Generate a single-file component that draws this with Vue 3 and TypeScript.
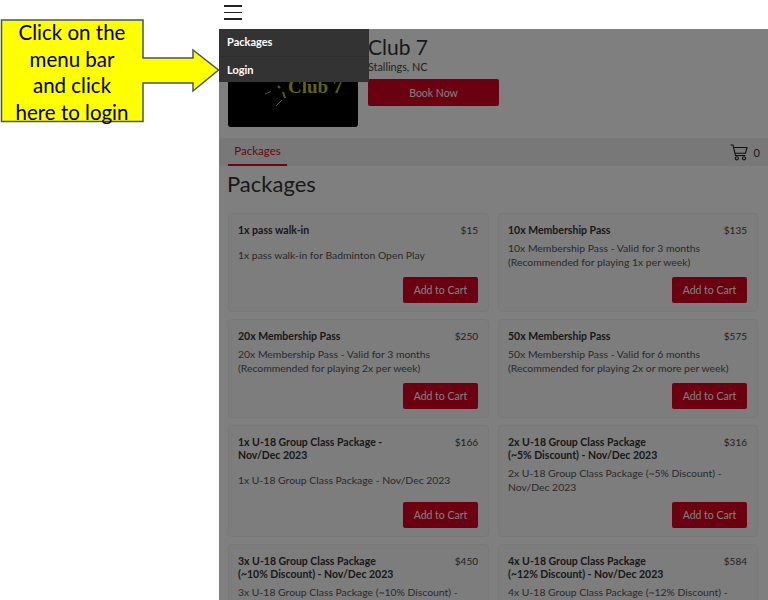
<script setup lang="ts">
interface Pack {
  name: string
  price: string
  desc: string
}

const packages: Pack[] = [
  { name: '1x pass walk-in', price: '$15', desc: '1x pass walk-in for Badminton Open Play' },
  { name: '10x Membership Pass', price: '$135', desc: '10x Membership Pass - Valid for 3 months (Recommended for playing 1x per week)' },
  { name: '20x Membership Pass', price: '$250', desc: '20x Membership Pass - Valid for 3 months (Recommended for playing 2x per week)' },
  { name: '50x Membership Pass', price: '$575', desc: '50x Membership Pass - Valid for 6 months (Recommended for playing 2x or more per week)' },
  { name: '1x U-18 Group Class Package - Nov/Dec 2023', price: '$166', desc: '1x U-18 Group Class Package - Nov/Dec 2023' },
  { name: '2x U-18 Group Class Package (~5% Discount) - Nov/Dec 2023', price: '$316', desc: '2x U-18 Group Class Package (~5% Discount) - Nov/Dec 2023' },
  { name: '3x U-18 Group Class Package (~10% Discount) - Nov/Dec 2023', price: '$450', desc: '3x U-18 Group Class Package (~10% Discount) - Nov/Dec 2023' },
  { name: '4x U-18 Group Class Package (~12% Discount) - Nov/Dec 2023', price: '$584', desc: '4x U-18 Group Class Package (~12% Discount) - Nov/Dec 2023' },
]
</script>

<template>
  <div class="page">
    <!-- left side is empty, the callout sits on top of it -->
    <div class="side"></div>

    <div class="main">
      <header class="topbar">
        <button class="burger" aria-label="Menu">
          <span></span><span></span><span></span>
        </button>
      </header>

      <div class="content">
        <section class="hero">
          <div class="logo">
            <svg class="logo-ticks" width="30" height="32" viewBox="0 0 30 32">
              <path d="M0 17 L6 14.5 M11 29 L17 23" stroke="#b4b41e" stroke-width="1" fill="none" />
              <path d="M13 9 L15 11 M18 15 L20 21" stroke="#b4b41e" stroke-width="2" fill="none" />
            </svg>
            <span class="logo-text">Club 7</span>
          </div>
          <div class="hero-info">
            <h2 class="club">Club 7</h2>
            <p class="place">Stallings, NC</p>
            <button class="btn book">Book Now</button>
          </div>
        </section>

        <nav class="tabs">
          <span class="tab">Packages</span>
          <span class="cart">
            <svg width="18" height="17" viewBox="0 0 18 17" fill="none" stroke="#222" stroke-width="1.1">
              <path d="M0.5 1 H3 L5.5 11.5 H15.5" />
              <path d="M3.6 3.5 H17 L15.5 9.2 H4.9" />
              <circle cx="6.8" cy="14.3" r="1.6" />
              <circle cx="14" cy="14.3" r="1.6" />
            </svg>
            <span class="cart-count">0</span>
          </span>
        </nav>

        <h1 class="heading">Packages</h1>

        <div class="grid">
          <article v-for="p in packages" :key="p.name" class="card">
            <div class="card-head">
              <span class="card-name">{{ p.name }}</span>
              <span class="card-price">{{ p.price }}</span>
            </div>
            <div class="card-desc"><span>{{ p.desc }}</span></div>
            <div class="card-foot">
              <button class="btn add">Add to Cart</button>
            </div>
          </article>
        </div>

        <div class="overlay"></div>
      </div>

      <ul class="dropdown">
        <li>Packages</li>
        <li>Login</li>
      </ul>
    </div>

    <!-- annotation pasted over the screenshot -->
    <div class="callout">
      <svg class="callout-shape" width="222" height="106" viewBox="0 0 222 106">
        <path d="M1.5 1 H143 V39 H193 V31 L218.5 51 L193 72 V64 H143 V102.5 H1.5 Z" fill="#ffff00" stroke="#44546a" stroke-width="1.5" />
      </svg>
      <div class="callout-text">Click on the<br />menu bar<br />and click<br />here to login</div>
    </div>
  </div>
</template>

<style>
html, body { margin: 0; padding: 0; overflow: hidden; background: #fff; }
</style>

<style scoped>
.page {
  position: relative;
  display: flex;
  width: 768px;
  height: 600px;
  overflow: hidden;
  font-family: "Lato", "Open Sans", sans-serif;
  background: #fff;
}
.side { width: 219px; flex: none; }
.main { position: relative; flex: 1; min-width: 0; }

.topbar { height: 29px; display: flex; align-items: center; padding-left: 5px; }
.burger {
  display: flex;
  flex-direction: column;
  gap: 5px;
  width: 18px;
  padding: 0;
  margin-top: -4px;
  border: none;
  background: none;
}
.burger span { display: block; height: 1.5px; background: #222; }

.content { position: relative; height: 571px; overflow: hidden; background: #fff; }
.overlay { position: absolute; inset: 0; background: rgba(0, 0, 0, 0.5); }

.hero { display: flex; gap: 10px; padding: 8px 0 0 9px; }
.logo {
  position: relative;
  width: 130px;
  height: 90px;
  background: #000;
  border-radius: 3px;
  box-sizing: border-box;
}
.logo-text {
  position: absolute;
  left: 60px;
  top: 39px;
  font: bold 19px "Liberation Serif", serif;
  color: #c4c421;
  white-space: nowrap;
}
.logo-ticks { position: absolute; left: 37px; top: 40px; }
.hero-info { display: flex; flex-direction: column; align-items: flex-start; }
.club { margin: -2px 0 0 0; font-size: 21px; line-height: 24px; font-weight: 400; color: #333; }
.place { margin: 1px 0 0 0; font-size: 10.8px; line-height: 14px; color: #444; }
.btn {
  border: none;
  border-radius: 2px;
  background: #d60021;
  color: #fff;
  font-family: inherit;
  font-size: 10.5px;
  padding: 0;
}
.book { width: 131px; height: 27px; margin-top: 5px; }

.tabs {
  display: flex;
  justify-content: space-between;
  align-items: center;
  height: 28px;
  margin-top: 11px;
  padding: 0 8px 0 9px;
  background: #f0f0f0;
}
.tab {
  box-sizing: border-box;
  width: 59px;
  height: 28px;
  line-height: 26px;
  text-align: center;
  font-size: 11.5px;
  color: #c8102e;
  border-bottom: 2px solid #c8102e;
}
.cart { display: flex; align-items: center; gap: 6px; }
.cart-count { font-size: 11px; color: #333; }

.heading { margin: 5px 0 17px 8px; font-size: 22px; line-height: 25px; font-weight: 400; color: #333; }

.grid {
  display: grid;
  grid-template-columns: 261px 260px;
  gap: 7px 9px;
  padding-left: 9px;
}
.card {
  display: flex;
  flex-direction: column;
  box-sizing: border-box;
  padding: 10px 10px 8px 9px;
  background: #fafafa;
  border: 1px solid #f0f0f0;
  border-radius: 4px;
}
.card-head { display: flex; justify-content: space-between; font-size: 10.5px; line-height: 13px; color: #333; }
.card-name { max-width: 160px; font-weight: 700; }
.card-price { font-size: 10px; color: #444; }
.card-desc {
  display: flex;
  align-items: center;
  min-height: 28px;
  margin: 4px 0 8px;
  font-size: 10.4px;
  line-height: 14px;
  color: #555;
}
.card-foot { display: flex; justify-content: flex-end; margin-top: auto; }
.add { width: 75px; height: 26px; }

.dropdown {
  position: absolute;
  top: 29px;
  left: 0;
  width: 150px;
  margin: 0;
  padding: 0;
  list-style: none;
  background: #333;
  color: #fff;
  font-size: 11px;
  font-weight: 700;
}
.dropdown li { height: 26.5px; line-height: 26px; padding-left: 8px; box-sizing: border-box; }
.dropdown li + li { border-top: 1px solid #2d2d2d; }

.callout { position: absolute; left: 0; top: 19px; width: 222px; height: 106px; }
.callout-shape { position: absolute; inset: 0; }
.callout-text {
  position: absolute;
  left: 1px;
  top: 0;
  width: 142px;
  text-align: center;
  font-size: 20.5px;
  line-height: 26.7px;
  color: #000;
}
</style>
